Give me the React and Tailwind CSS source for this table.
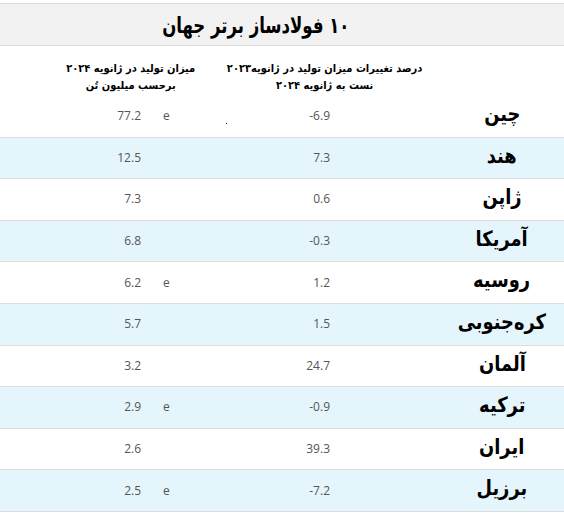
const ROWS = [
    { name: 'چین', prod: '77.2', est: true, change: '-6.9' },
    { name: 'هند', prod: '12.5', est: false, change: '7.3' },
    { name: 'ژاپن', prod: '7.3', est: false, change: '0.6' },
    { name: 'آمریکا', prod: '6.8', est: false, change: '-0.3' },
    { name: 'روسیه', prod: '6.2', est: true, change: '1.2' },
    { name: 'کره‌جنوبی', prod: '5.7', est: false, change: '1.5' },
    { name: 'آلمان', prod: '3.2', est: false, change: '24.7' },
    { name: 'ترکیه', prod: '2.9', est: true, change: '-0.9' },
    { name: 'ایران', prod: '2.6', est: false, change: '39.3' },
    { name: 'برزیل', prod: '2.5', est: true, change: '-7.2' },
];

const fa = "font-['DejaVu_Sans',sans-serif]";
const num = "font-['Open_Sans',sans-serif]";

export default function App() {
    return (
        <div className="w-[564px] h-[520px] bg-white pt-[3px]">
            {/* title bar */}
            <div className="h-[43px] bg-[#f2f2f2] border-y border-[#dcdcdc] flex items-center">
                <div className="w-[512px] flex justify-center">
                    <h1 dir="rtl" className={`${fa} font-bold text-[22px] text-black whitespace-nowrap scale-x-[0.75] pt-[2px]`}>
                        ۱۰ فولادساز برتر جهان
                    </h1>
                </div>
            </div>

            {/* column headers */}
            <div className={`${fa} font-bold text-[11px] text-black flex items-center h-[50px] leading-[17px] pt-[12px]`}>
                <div className="w-[262px] flex justify-center">
                    <div dir="rtl" className="text-center whitespace-nowrap scale-x-[0.9]">
                        میزان تولید در ژانویه ۲۰۲۴<br />برحسب میلیون تُن
                    </div>
                </div>
                <div className="w-[126px] flex justify-center">
                    <div dir="rtl" className="text-center whitespace-nowrap scale-x-[0.9]">
                        درصد تغییرات میزان تولید در ژانویه۲۰۲۳<br />نست به ژانویه ۲۰۲۴
                    </div>
                </div>
            </div>

            {ROWS.map((row, i) => (
                <div
                    key={row.name}
                    className={`flex items-center h-[41.6px] border-b border-[#dddddd] ${i % 2 ? 'bg-[#e5f5fc]' : 'bg-white'} ${i === 0 ? 'relative' : ''}`}
                >
                    <div className={`${num} w-[141px] text-right text-[12px] text-[#555]`}>{row.prod}</div>
                    <div className={`${num} w-[40px] pl-[22px] text-[12px] text-[#555]`}>{row.est ? 'e' : ''}</div>
                    <div className={`${num} w-[149px] text-right text-[12px] text-[#555]`}>{row.change}</div>
                    <div className="flex-1" />
                    <div className="w-[124px] flex justify-center pb-[3px]">
                        <span dir="rtl" className={`${fa} font-bold text-[21px] text-black whitespace-nowrap scale-x-[0.85]`}>{row.name}</span>
                    </div>
                    {i === 0 && <span className="absolute left-[226px] top-[27px] w-px h-px bg-[#8b0000]" />}
                </div>
            ))}
        </div>
    );
}
